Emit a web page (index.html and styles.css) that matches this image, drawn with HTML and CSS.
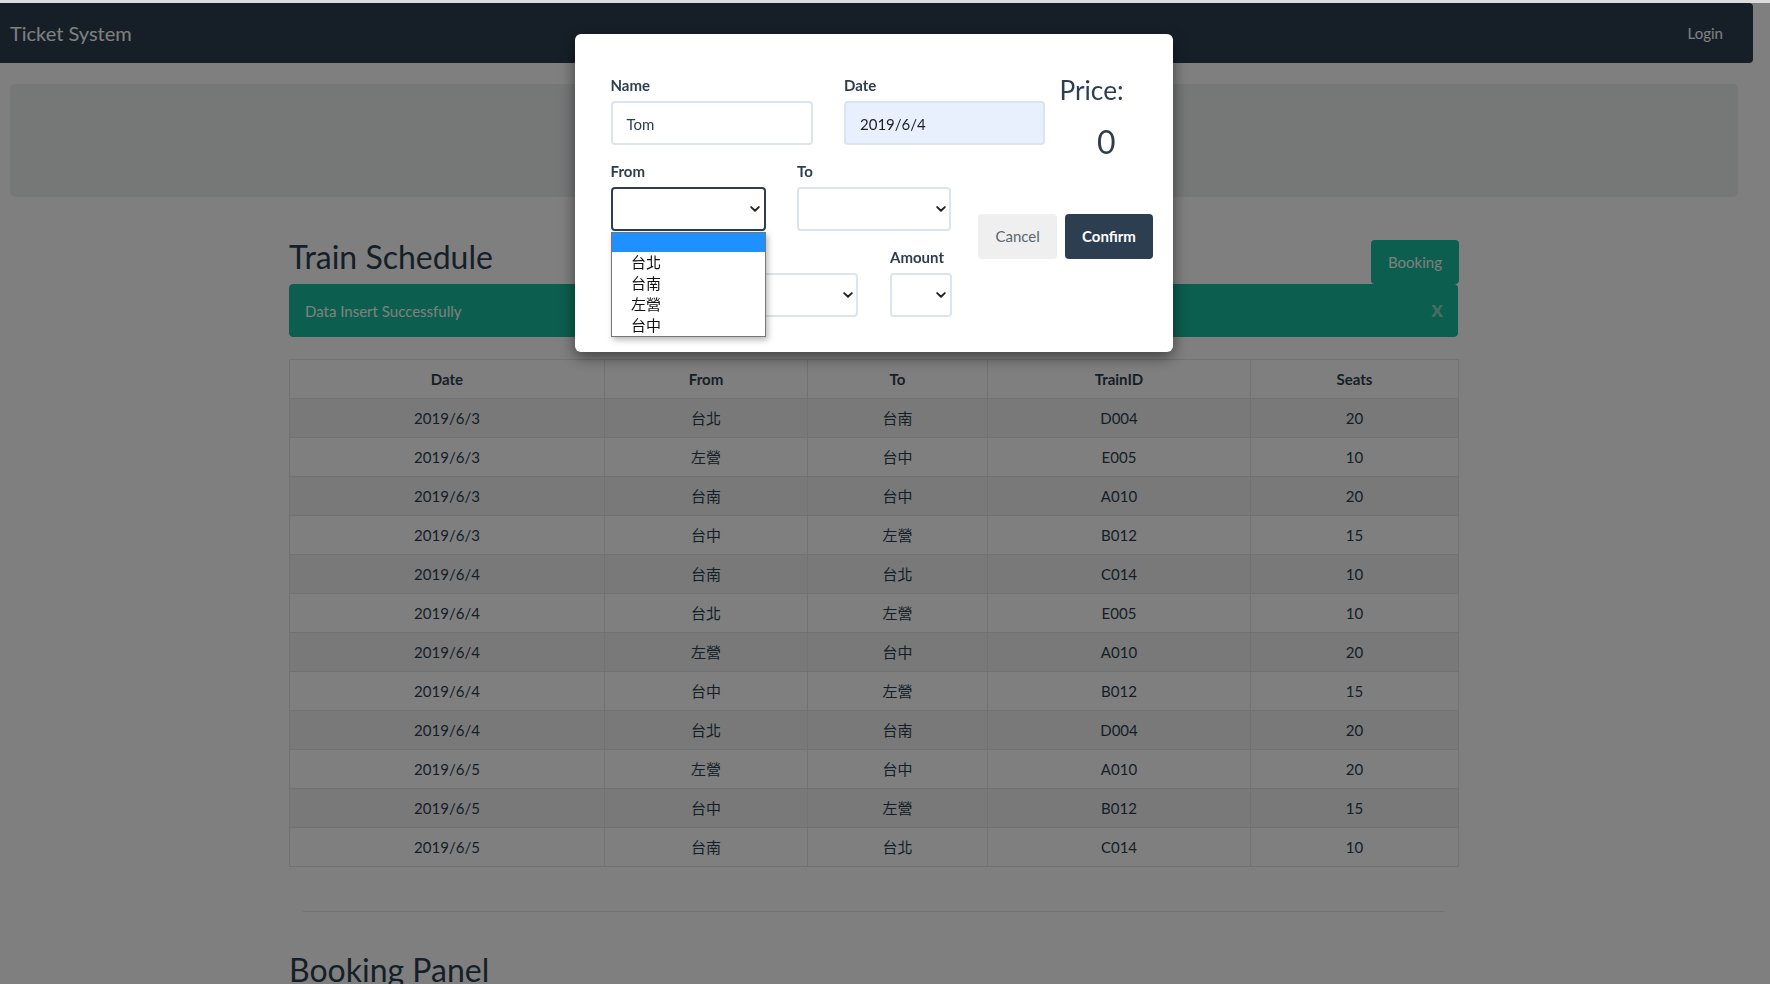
FILE: index.html
```html
<!DOCTYPE html>
<html lang="zh-Hant">
<head>
<meta charset="utf-8">
<title>Ticket System</title>
<link rel="stylesheet" href="styles.css">
</head>
<body>
<div class="page">
  <nav class="navbar">
    <span class="brand">Ticket System</span>
    <span class="login">Login</span>
  </nav>
  <div class="jumbotron"></div>
  <main class="container">
    <div class="title-row">
      <h2 class="heading">Train Schedule</h2>
      <button class="btn-booking">Booking</button>
    </div>
    <div class="alert">
      <span>Data Insert Successfully</span>
      <span class="close">x</span>
    </div>
    <table class="schedule">
      <colgroup>
        <col class="c-date"><col class="c-from"><col class="c-to"><col class="c-id"><col class="c-seats">
      </colgroup>
      <thead>
        <tr><th>Date</th><th>From</th><th>To</th><th>TrainID</th><th>Seats</th></tr>
      </thead>
      <tbody>
        <tr><td>2019/6/3</td><td>台北</td><td>台南</td><td>D004</td><td>20</td></tr>
        <tr><td>2019/6/3</td><td>左營</td><td>台中</td><td>E005</td><td>10</td></tr>
        <tr><td>2019/6/3</td><td>台南</td><td>台中</td><td>A010</td><td>20</td></tr>
        <tr><td>2019/6/3</td><td>台中</td><td>左營</td><td>B012</td><td>15</td></tr>
        <tr><td>2019/6/4</td><td>台南</td><td>台北</td><td>C014</td><td>10</td></tr>
        <tr><td>2019/6/4</td><td>台北</td><td>左營</td><td>E005</td><td>10</td></tr>
        <tr><td>2019/6/4</td><td>左營</td><td>台中</td><td>A010</td><td>20</td></tr>
        <tr><td>2019/6/4</td><td>台中</td><td>左營</td><td>B012</td><td>15</td></tr>
        <tr><td>2019/6/4</td><td>台北</td><td>台南</td><td>D004</td><td>20</td></tr>
        <tr><td>2019/6/5</td><td>左營</td><td>台中</td><td>A010</td><td>20</td></tr>
        <tr><td>2019/6/5</td><td>台中</td><td>左營</td><td>B012</td><td>15</td></tr>
        <tr><td>2019/6/5</td><td>台南</td><td>台北</td><td>C014</td><td>10</td></tr>
      </tbody>
    </table>
    <hr class="divider">
    <h2 class="heading">Booking Panel</h2>
  </main>
</div>

<div class="backdrop"></div>

<div class="modal">
  <div class="row row-top">
    <div class="group w-name">
      <label class="lbl">Name</label>
      <div class="field">Tom</div>
    </div>
    <div class="group w-date">
      <label class="lbl">Date</label>
      <div class="field autofill">2019/6/4</div>
    </div>
    <div class="price">
      <h3 class="price-label">Price:</h3>
      <div class="price-value">0</div>
    </div>
  </div>
  <div class="row row-bottom">
    <div class="left-col">
      <div class="row">
        <div class="group w-from from-group">
          <label class="lbl">From</label>
          <div class="field select focused">
            <svg class="chev" width="10" height="6" viewBox="0 0 10 6"><path d="M1.2 1.1L5 4.7L8.8 1.1" fill="none" stroke="#222" stroke-width="1.9" stroke-linecap="round" stroke-linejoin="round"/></svg>
          </div>
          <div class="popup">
            <div class="opt blank"></div>
            <div class="opt">台北</div>
            <div class="opt">台南</div>
            <div class="opt">左營</div>
            <div class="opt">台中</div>
          </div>
        </div>
        <div class="group w-to">
          <label class="lbl">To</label>
          <div class="field select">
            <svg class="chev" width="10" height="6" viewBox="0 0 10 6"><path d="M1.2 1.1L5 4.7L8.8 1.1" fill="none" stroke="#222" stroke-width="1.9" stroke-linecap="round" stroke-linejoin="round"/></svg>
          </div>
        </div>
      </div>
      <div class="row">
        <div class="group w-time">
          <label class="lbl">&nbsp;</label>
          <div class="field select">
            <svg class="chev" width="10" height="6" viewBox="0 0 10 6"><path d="M1.2 1.1L5 4.7L8.8 1.1" fill="none" stroke="#222" stroke-width="1.9" stroke-linecap="round" stroke-linejoin="round"/></svg>
          </div>
        </div>
        <div class="group w-amount">
          <label class="lbl">Amount</label>
          <div class="field select">
            <svg class="chev" width="10" height="6" viewBox="0 0 10 6"><path d="M1.2 1.1L5 4.7L8.8 1.1" fill="none" stroke="#222" stroke-width="1.9" stroke-linecap="round" stroke-linejoin="round"/></svg>
          </div>
        </div>
      </div>
    </div>
    <div class="actions">
      <button class="btn btn-cancel">Cancel</button>
      <button class="btn btn-confirm">Confirm</button>
    </div>
  </div>
</div>
</body>
</html>
```

FILE: styles.css
```css
html {
  background: #dcdcdc;
  height: 984px;
  overflow: hidden;
}
body {
  margin: 0;
  height: 984px;
  overflow: hidden;
  font-family: "Lato", "Noto Sans CJK TC", sans-serif;
  font-size: 15px;
  color: #2c3e50;
}
.page {
  margin-top: 3px;
  height: 981px;
  background: #ffffff;
  overflow: hidden;
}
.navbar {
  height: 60px;
  margin-right: 17px;
  background: #2c3e50;
  border-radius: 0 4px 4px 0;
  display: flex;
  align-items: center;
  justify-content: space-between;
  padding: 0 30px 0 10px;
  color: #ffffff;
}
.brand {
  font-size: 20px;
  line-height: 30px;
}
.login {
  font-size: 15px;
  line-height: 22px;
}
.jumbotron {
  margin: 21px 32px 0 10px;
  height: 113px;
  background: #ecf0f1;
  border-radius: 5px;
}
.container {
  margin-left: 289px;
  width: 1169px;
  padding-top: 40.6px;
}
.title-row {
  display: flex;
  justify-content: space-between;
  align-items: flex-end;
}
.heading {
  margin: 0 0 8px 0;
  font-size: 32px;
  font-weight: 400;
  line-height: 1.2;
  color: #2c3e50;
}
.btn-booking {
  height: 44.3px;
  width: 88px;
  margin: 0 -1px 0 0;
  border: none;
  border-radius: 4px;
  background: #18bc9c;
  color: #ffffff;
  font-family: inherit;
  font-size: 15px;
  padding: 0;
}
.alert {
  display: flex;
  justify-content: space-between;
  align-items: baseline;
  background: #18bc9c;
  border: 1px solid #18bc9c;
  border-radius: 4px;
  padding: 13.5px 14px 13.5px 15px;
  line-height: 22.5px;
  color: #ffffff;
  margin-bottom: 21.3px;
}
.close {
  font-size: 22.5px;
  font-weight: 700;
  line-height: 22.5px;
  color: rgba(255, 255, 255, 0.5);
}
.schedule {
  width: 1169px;
  table-layout: fixed;
  border-collapse: collapse;
}
.c-date { width: 315px; }
.c-from { width: 203px; }
.c-to { width: 180px; }
.c-id { width: 263px; }
.c-seats { width: 208px; }
.schedule th,
.schedule td {
  border: 1px solid #e2e4e6;
  padding: 8px;
  line-height: 22.05px;
  text-align: center;
  font-size: 15px;
}
.schedule th {
  font-weight: 700;
}
.schedule tbody tr:nth-child(odd) {
  background: rgba(0, 0, 0, 0.05);
}
.divider {
  margin: 43.6px 14px 39.4px 14px;
  border: 0;
  border-top: 1px solid rgba(0, 0, 0, 0.1);
}
.backdrop {
  position: fixed;
  top: 3px;
  left: 0;
  right: 0;
  bottom: 0;
  background: rgba(0, 0, 0, 0.5);
}
.modal {
  position: fixed;
  left: 575px;
  top: 34px;
  width: 598px;
  box-sizing: border-box;
  padding: 40px 20px 19.4px 35.5px;
  background: #ffffff;
  border-radius: 6px;
  box-shadow: 0 5px 15px rgba(0, 0, 0, 0.5);
}
.row {
  display: flex;
  align-items: flex-start;
}
.group {
  margin-bottom: 15.2px;
}
.lbl {
  display: block;
  font-weight: 700;
  line-height: 22px;
  margin-bottom: 5px;
  color: #2c3e50;
}
.field {
  box-sizing: border-box;
  height: 44px;
  border: 2px solid #dce4ec;
  border-radius: 4px;
  padding: 2px 14px 0 14px;
  display: flex;
  align-items: center;
  line-height: 18px;
  color: #2c3e50;
  background: #ffffff;
}
.autofill {
  background: #e8f0fe;
  color: #1b1f24;
}
.select {
  justify-content: flex-end;
  padding: 0 3.5px 0 0;
}
.focused {
  border-color: #2c3e50;
}
.chev {
  display: block;
}
.w-name { width: 202px; margin-right: 31.5px; }
.w-date { width: 201px; margin-right: 14.5px; }
.w-from { width: 155.2px; margin-right: 31.3px; }
.w-to { width: 154.5px; }
.w-time { width: 247.5px; margin-right: 32px; }
.w-amount { width: 61.5px; }
.left-col {
  width: 341px;
}
.price {
  flex: 1;
  height: 80px;
  margin-top: 0.7px;
}
.price-label {
  margin: 0 0 16.5px 0;
  font-size: 26.25px;
  font-weight: 400;
  line-height: 1.2;
  color: #2c3e50;
}
.price-value {
  text-align: center;
  font-size: 32px;
  line-height: 1.2;
  color: #2c3e50;
}
.from-group {
  position: relative;
  z-index: 5;
}
.popup {
  position: absolute;
  left: 0;
  top: 72px;
  width: 155.2px;
  box-sizing: border-box;
  border: 1px solid #767676;
  background: #ffffff;
  box-shadow: 2px 3px 6px rgba(0, 0, 0, 0.28);
}
.opt {
  height: 21px;
  line-height: 20px;
  padding-left: 19.5px;
  font-family: "Noto Sans CJK TC", sans-serif;
  font-size: 15px;
  color: #111111;
}
.opt.blank {
  height: 18.4px;
  background: #1e90ff;
}
.actions {
  flex: 1;
  display: flex;
  justify-content: flex-end;
  gap: 8px;
  padding-top: 54.1px;
}
.btn {
  height: 44.4px;
  border: none;
  border-radius: 4px;
  font-family: inherit;
  font-size: 15px;
  padding: 0;
}
.btn-cancel {
  width: 78.7px;
  background: #efefef;
  color: #5b6670;
}
.btn-confirm {
  width: 88px;
  background: #2c3e50;
  color: #ffffff;
  font-weight: 700;
}
```
